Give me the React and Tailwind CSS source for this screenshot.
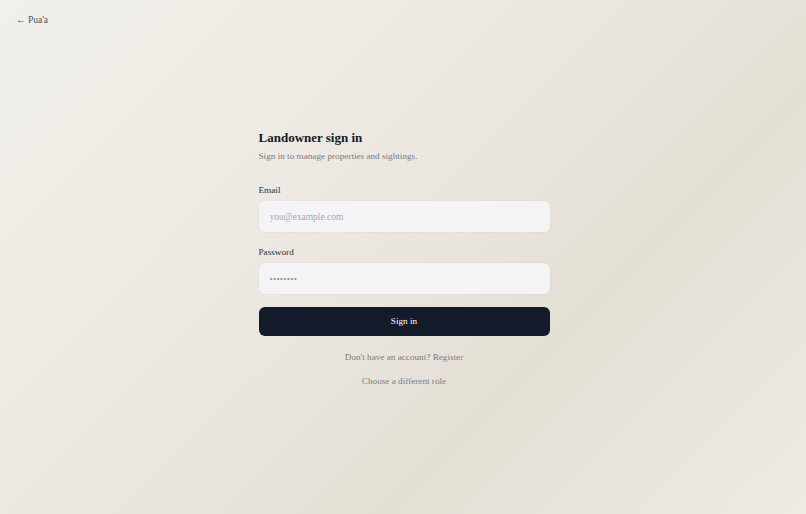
import React from 'react';

const App = () => {
    return (
        <div
            className="relative w-full h-[514px] overflow-hidden bg-[linear-gradient(135deg,#f2f0eb_0%,#ece8e1_42%,#e4dfd5_68%,#eeebe5_100%)] text-[#1f2430]"
            style={{ fontFamily: '"Liberation Serif", "Times New Roman", serif' }}
        >
            <a href="#" className="absolute left-4 top-[12px] text-[9.5px] leading-4 text-[#4b5160]">
                ← Pua'a
            </a>
            <div className="flex justify-center pt-[128px]">
                <div className="w-[291px] ml-[2px]">
                    <h1 className="text-[13px] font-bold leading-5 text-[#161b26]">Landowner sign in</h1>
                    <p className="text-[9.2px] leading-4 text-[#777a82]">Sign in to manage properties and sightings.</p>

                    <label className="block mt-[18px] text-[9.2px] leading-4 text-[#2b2f38]">Email</label>
                    <input
                        type="email"
                        placeholder="you@example.com"
                        className="mt-[3px] w-full h-[31px] rounded-md bg-[#f4f4f7] px-[11px] text-[9.5px] placeholder:text-[#a6a8b0] outline-none shadow-[0_0_0_1px_rgba(0,0,0,0.02)]"
                    />

                    <label className="block mt-[12px] text-[9.2px] leading-4 text-[#2b2f38]">Password</label>
                    <input
                        type="password"
                        placeholder="••••••••"
                        className="mt-[3px] w-full h-[31px] rounded-md bg-[#f4f4f7] px-[11px] text-[9px] tracking-[0.3px] placeholder:text-[#8d9098] outline-none shadow-[0_0_0_1px_rgba(0,0,0,0.02)]"
                    />

                    <button className="mt-[13px] w-full h-[29px] rounded-md bg-[#131a2a] text-[9.2px] text-white">
                        Sign in
                    </button>

                    <p className="mt-[13px] text-center text-[9.2px] leading-4 text-[#7a7d84]">
                        Don't have an account? Register
                    </p>
                    <p className="mt-[8px] text-center text-[9.2px] leading-4 text-[#7a7d84]">
                        Choose a different role
                    </p>
                </div>
            </div>
        </div>
    );
};

export default App;
